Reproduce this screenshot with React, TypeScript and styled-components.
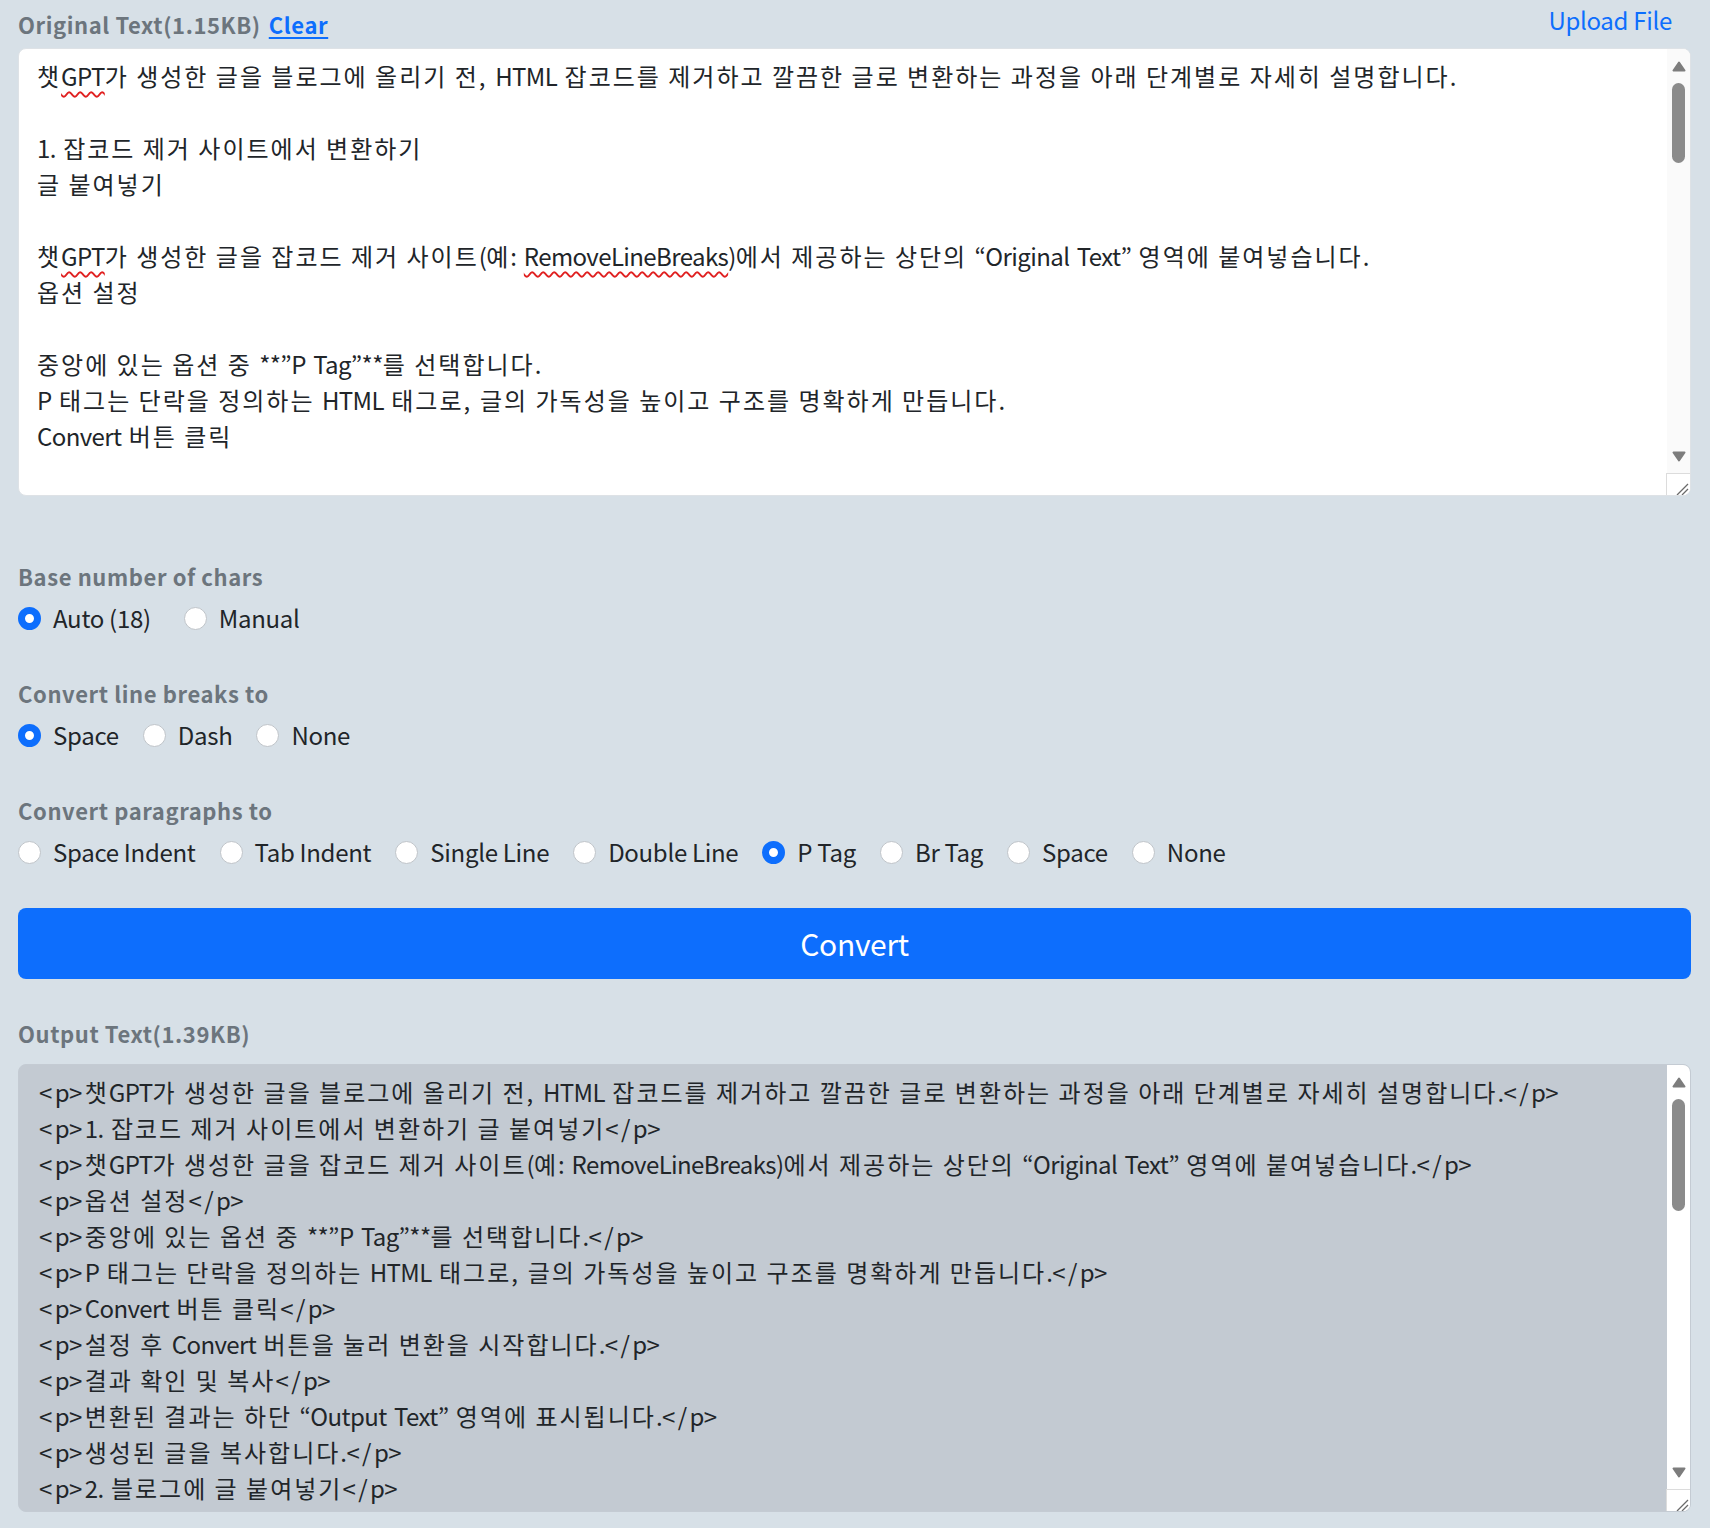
import React from "react";
import styled, { createGlobalStyle } from "styled-components";

const GlobalStyle = createGlobalStyle`
  html, body {
    margin: 0;
    padding: 0;
    background: #d7e0e7;
  }
  body {
    font-family: "Noto Sans CJK KR", "Noto Sans", sans-serif;
    color: #212529;
  }
  * { box-sizing: border-box; }
`;

const Page = styled.div`
  display: flex;
  flex-direction: column;
  padding: 0 19px 16px 18px;
  min-height: 1528px;
`;

const HeaderRow = styled.div`
  display: flex;
  justify-content: space-between;
  align-items: flex-start;
  height: 48px;
`;

const FieldTitle = styled.div<{ $top?: number; $bottom?: number }>`
  font-size: 22px;
  font-weight: 700;
  line-height: 33px;
  letter-spacing: 0.6px;
  color: #6c757d;
  margin-top: ${(p) => p.$top ?? 0}px;
  margin-bottom: ${(p) => p.$bottom ?? 0}px;
  white-space: nowrap;
`;

const ClearLink = styled.a`
  color: #0d6efd;
  text-decoration: underline;
  text-underline-offset: 3px;
  margin-left: 8px;
  cursor: pointer;
`;

const UploadLink = styled.a`
  font-size: 24px;
  line-height: 36px;
  letter-spacing: -0.3px;
  margin-top: 2px;
  margin-right: 19px;
  color: #0d6efd;
  cursor: pointer;
`;

const TextBox = styled.div<{ $output?: boolean }>`
  display: flex;
  height: 448px;
  border: 1px solid ${(p) => (p.$output ? "#c4cbd3" : "#dee2e6")};
  border-radius: 8px;
  overflow: hidden;
  background: ${(p) => (p.$output ? "#c3cad2" : "#ffffff")};
`;

const TextContent = styled.div<{ $padLeft: number }>`
  flex: 1;
  min-width: 0;
  overflow: hidden;
  padding: 9px 18px 0 ${(p) => p.$padLeft}px;
  font-size: 24px;
  line-height: 36px;
  color: #212529;
`;

const TextLine = styled.div`
  min-height: 36px;
  white-space: pre;
`;

const Run = styled.span<{ $kind: "wide" | "narrow" | "symbol" }>`
  letter-spacing: ${(p) =>
    p.$kind === "wide" ? "2px" : p.$kind === "symbol" ? "2.4px" : "-0.6px"};
`;

const Spell = styled.span`
  text-decoration: underline wavy #e02020;
  text-decoration-thickness: 1.5px;
  text-underline-offset: 5px;
  text-decoration-skip-ink: none;
`;

const SPLIT = /([\uAC00-\uD7A3\u3131-\u318E ]+|[<>/,]+)/;
const HANGUL_TEST = /^[\uAC00-\uD7A3\u3131-\u318E ]+$/;
const SYMBOL_TEST = /^[<>/,]+$/;

const typeset = (text: string, keyBase: string) =>
  text
    .split(SPLIT)
    .filter((p) => p.length > 0)
    .map((part, i) => (
      <Run
        key={`${keyBase}-${i}`}
        $kind={HANGUL_TEST.test(part) ? "wide" : SYMBOL_TEST.test(part) ? "symbol" : "narrow"}
      >
        {part}
      </Run>
    ));

type Seg = string | { spell: string };

const renderSegs = (segs: Seg[], key: string) =>
  segs.map((s, i) =>
    typeof s === "string" ? (
      <React.Fragment key={`${key}-${i}`}>{typeset(s, `${key}-${i}`)}</React.Fragment>
    ) : (
      <Spell key={`${key}-${i}`}>{typeset(s.spell, `${key}-${i}s`)}</Spell>
    )
  );

const ScrollColumn = styled.div<{ $track: string }>`
  width: 23px;
  flex: none;
  display: flex;
  flex-direction: column;
  background: ${(p) => p.$track};
`;

const ScrollButton = styled.div`
  height: 34px;
  flex: none;
  display: flex;
  align-items: center;
  justify-content: center;
`;

const ScrollTrack = styled.div`
  flex: 1;
  display: flex;
  flex-direction: column;
  align-items: center;
`;

const ScrollThumb = styled.div<{ $height: number }>`
  width: 13px;
  height: ${(p) => p.$height}px;
  border-radius: 7px;
  background: #8b8b8b;
`;

const ScrollCorner = styled.div`
  height: 22px;
  flex: none;
  border-top: 1px solid #dcdcdc;
  border-left: 1px solid #dcdcdc;
  background: #ffffff;
  margin-left: -1px;
  display: flex;
  align-items: flex-end;
  justify-content: flex-end;
`;

const Arrow = ({ down }: { down?: boolean }) => (
  <svg width="14" height="11" viewBox="0 0 14 11">
    <polygon
      points={down ? "1.5,1.5 12.5,1.5 7,9.5" : "1.5,9.5 12.5,9.5 7,1.5"}
      fill="#7d7d7d"
      stroke="#7d7d7d"
      strokeWidth="2"
      strokeLinejoin="round"
    />
  </svg>
);

const Scrollbar = ({ track, thumb }: { track: string; thumb: number }) => (
  <ScrollColumn $track={track}>
    <ScrollButton>
      <Arrow />
    </ScrollButton>
    <ScrollTrack>
      <ScrollThumb $height={thumb} />
    </ScrollTrack>
    <ScrollButton>
      <Arrow down />
    </ScrollButton>
    <ScrollCorner>
      <svg width="22" height="21" viewBox="0 0 22 21">
        <line x1="20" y1="10" x2="9" y2="21" stroke="#6a6a6a" strokeWidth="1.3" />
        <line x1="20" y1="15" x2="14" y2="21" stroke="#6a6a6a" strokeWidth="1.3" />
      </svg>
    </ScrollCorner>
  </ScrollColumn>
);

const Group = styled.div<{ $top: number }>`
  margin-top: ${(p) => p.$top}px;
  display: flex;
  flex-direction: column;
`;

const RadioRow = styled.div`
  display: flex;
  align-items: center;
  gap: 24px;
  height: 36px;
`;

const Option = styled.label<{ $trail?: number }>`
  display: flex;
  align-items: center;
  gap: 12px;
  padding-right: ${(p) => p.$trail ?? 0}px;
  font-size: 24px;
  line-height: 36px;
  letter-spacing: -0.3px;
  color: #212529;
  white-space: nowrap;
  cursor: pointer;
`;

const RadioDot = styled.input`
  appearance: none;
  -webkit-appearance: none;
  width: 23px;
  height: 23px;
  margin: 0;
  border-radius: 50%;
  border: 1px solid #bfc4c9;
  background: #ffffff;
  flex: none;
  &:checked {
    border: 7px solid #0d6efd;
  }
`;

const ConvertButton = styled.button`
  margin-top: 38px;
  height: 71px;
  width: 100%;
  border: none;
  border-radius: 8px;
  background: #0d6efd;
  color: #ffffff;
  font-family: inherit;
  font-size: 30px;
  line-height: 45px;
  letter-spacing: -0.3px;
  cursor: pointer;
`;

type OptionDef = { label: string; trail?: number };

type RadioGroupProps = {
  name: string;
  title: string;
  options: OptionDef[];
  selected: string;
  top: number;
};

const RadioGroup = ({ name, title, options, selected, top }: RadioGroupProps) => (
  <Group $top={top}>
    <FieldTitle $bottom={7}>{title}</FieldTitle>
    <RadioRow>
      {options.map((o) => (
        <Option key={o.label} $trail={o.trail}>
          <RadioDot type="radio" name={name} defaultChecked={o.label === selected} />
          <span>{o.label}</span>
        </Option>
      ))}
    </RadioRow>
  </Group>
);

const opts = (...labels: string[]): OptionDef[] => labels.map((label) => ({ label }));

const inputLines: Seg[][] = [
  [
    "챗",
    { spell: "GPT" },
    "가 생성한 글을 블로그에 올리기 전, HTML 잡코드를 제거하고 깔끔한 글로 변환하는 과정을 아래 단계별로 자세히 설명합니다.",
  ],
  [""],
  ["1. 잡코드 제거 사이트에서 변환하기"],
  ["글 붙여넣기"],
  [""],
  [
    "챗",
    { spell: "GPT" },
    "가 생성한 글을 잡코드 제거 사이트(예: ",
    { spell: "RemoveLineBreaks" },
    ")에서 제공하는 상단의 “Original Text” 영역에 붙여넣습니다.",
  ],
  ["옵션 설정"],
  [""],
  ["중앙에 있는 옵션 중 **”P Tag”**를 선택합니다."],
  ["P 태그는 단락을 정의하는 HTML 태그로, 글의 가독성을 높이고 구조를 명확하게 만듭니다."],
  ["Convert 버튼 클릭"],
  [""],
];

const outputLines = [
  "<p>챗GPT가 생성한 글을 블로그에 올리기 전, HTML 잡코드를 제거하고 깔끔한 글로 변환하는 과정을 아래 단계별로 자세히 설명합니다.</p>",
  "<p>1. 잡코드 제거 사이트에서 변환하기 글 붙여넣기</p>",
  "<p>챗GPT가 생성한 글을 잡코드 제거 사이트(예: RemoveLineBreaks)에서 제공하는 상단의 “Original Text” 영역에 붙여넣습니다.</p>",
  "<p>옵션 설정</p>",
  "<p>중앙에 있는 옵션 중 **”P Tag”**를 선택합니다.</p>",
  "<p>P 태그는 단락을 정의하는 HTML 태그로, 글의 가독성을 높이고 구조를 명확하게 만듭니다.</p>",
  "<p>Convert 버튼 클릭</p>",
  "<p>설정 후 Convert 버튼을 눌러 변환을 시작합니다.</p>",
  "<p>결과 확인 및 복사</p>",
  "<p>변환된 결과는 하단 “Output Text” 영역에 표시됩니다.</p>",
  "<p>생성된 글을 복사합니다.</p>",
  "<p>2. 블로그에 글 붙여넣기</p>",
];

export default function App() {
  return (
    <>
      <GlobalStyle />
      <Page>
        <HeaderRow>
          <FieldTitle $top={7.5}>
            Original Text(1.15KB)
            <ClearLink>Clear</ClearLink>
          </FieldTitle>
          <UploadLink>Upload File</UploadLink>
        </HeaderRow>
        <TextBox>
          <TextContent $padLeft={18}>
            {inputLines.map((segs, i) => (
              <TextLine key={i}>{renderSegs(segs, `in${i}`)}</TextLine>
            ))}
          </TextContent>
          <Scrollbar track="#fafafa" thumb={80} />
        </TextBox>

        <RadioGroup
          name="base"
          title="Base number of chars"
          options={[{ label: "Auto (18)", trail: 9 }, { label: "Manual" }]}
          selected="Auto (18)"
          top={64}
        />
        <RadioGroup
          name="lb"
          title="Convert line breaks to"
          options={opts("Space", "Dash", "None")}
          selected="Space"
          top={41}
        />
        <RadioGroup
          name="para"
          title="Convert paragraphs to"
          options={opts(
            "Space Indent",
            "Tab Indent",
            "Single Line",
            "Double Line",
            "P Tag",
            "Br Tag",
            "Space",
            "None"
          )}
          selected="P Tag"
          top={41}
        />

        <ConvertButton type="button">Convert</ConvertButton>

        <Group $top={38}>
          <FieldTitle $bottom={14}>Output Text(1.39KB)</FieldTitle>
          <TextBox $output>
            <TextContent $padLeft={20}>
              {outputLines.map((l, i) => (
                <TextLine key={i}>{typeset(l, `out${i}`)}</TextLine>
              ))}
            </TextContent>
            <Scrollbar track="#ffffff" thumb={112} />
          </TextBox>
        </Group>
      </Page>
    </>
  );
}
